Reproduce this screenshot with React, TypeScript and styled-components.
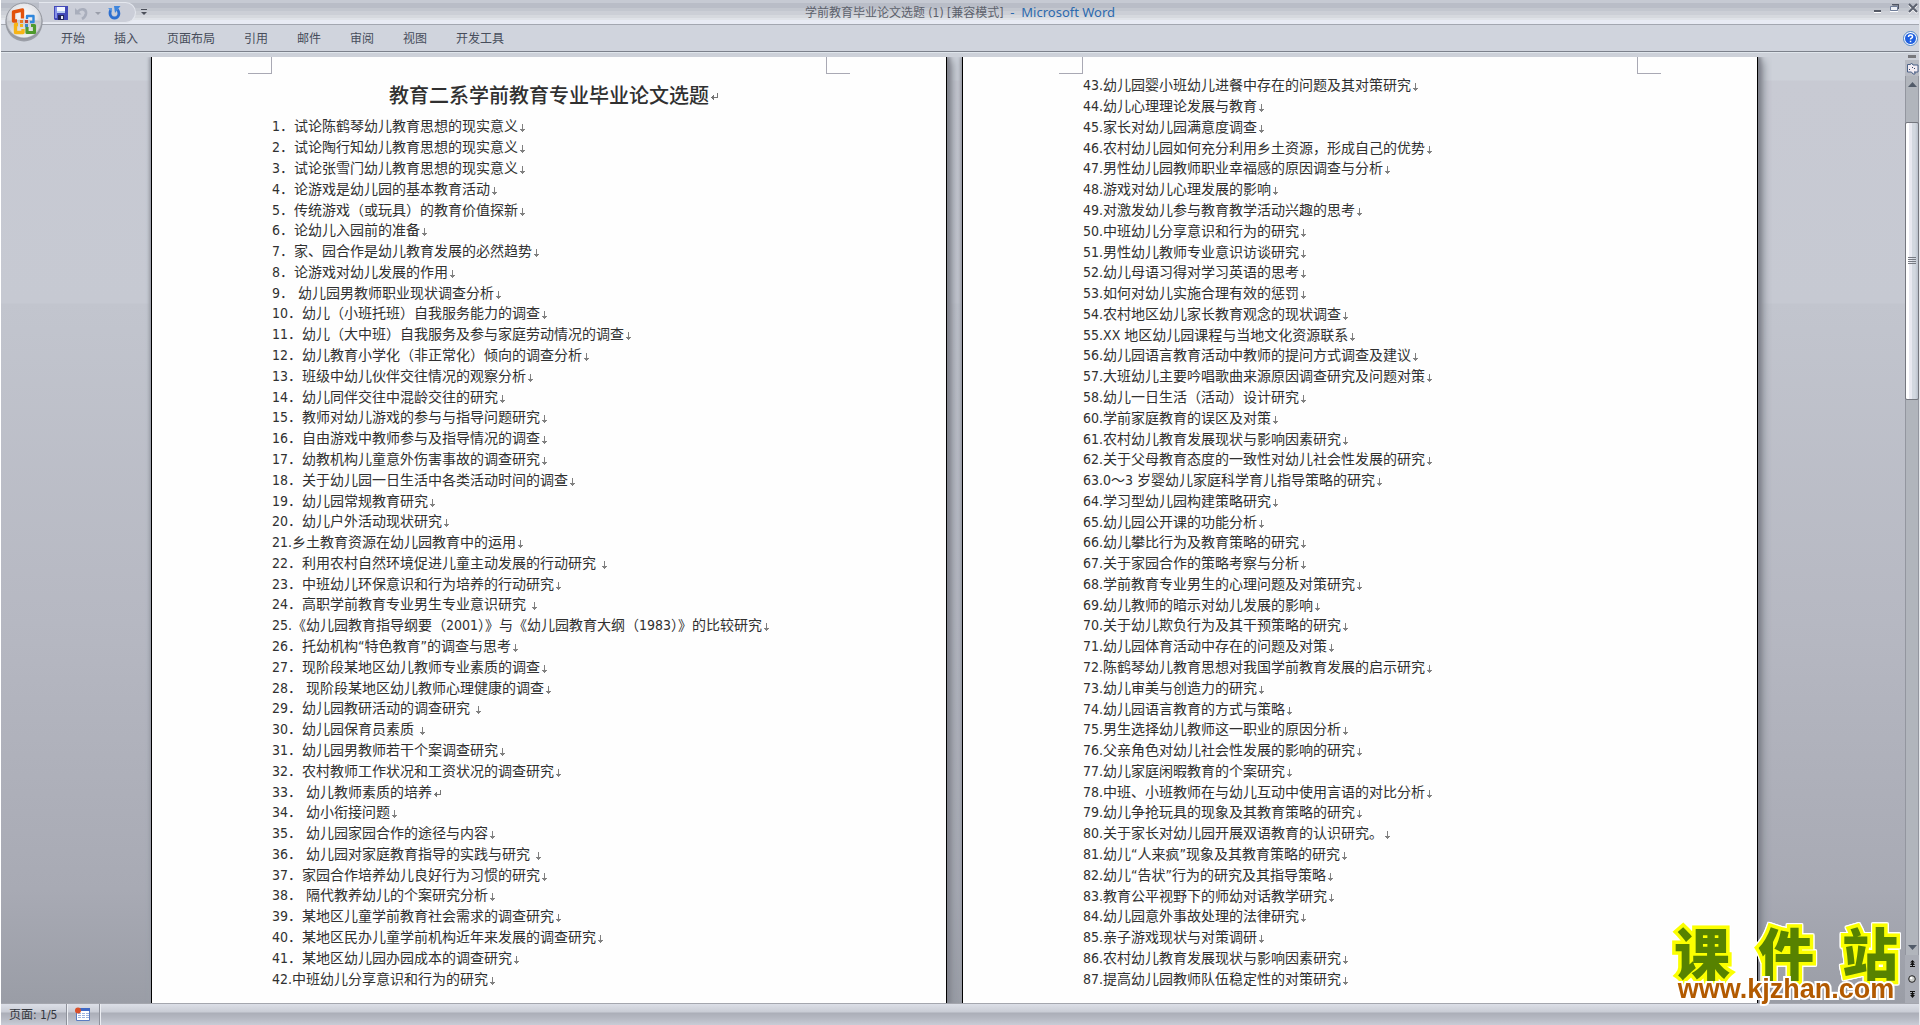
import React from "react";
import styled, { createGlobalStyle, css } from "styled-components";

const GlobalStyle = createGlobalStyle`
  * { box-sizing: border-box; }
  body { margin: 0; background: #ffffff; }
  button { border: 0; padding: 0; margin: 0; background: none; font: inherit; color: inherit; cursor: pointer; }
`;

const latin = `"DejaVu Sans Condensed", "DejaVu Sans"`;
const cjk = `"Noto Sans CJK SC"`;

const Shell = styled.div`
  display: flex;
  flex-direction: column;
  min-height: 100vh;
  border-left: 1px solid #ffffff;
  border-right: 1px solid #e6e8ec;
  background: #cdd1d9;
  font-family: ${latin}, ${cjk}, sans-serif;
  font-size: 12px;
  color: #3f444e;
`;

/* ---------- header ---------- */

const Header = styled.header`
  display: grid;
  grid-template-columns: 44px 1fr;
  grid-template-rows: 25px 28px;
`;

const TitleBar = styled.div`
  grid-column: 1 / -1;
  grid-row: 1;
  display: grid;
  grid-template-columns: 1fr auto 1fr;
  align-items: start;
  border-bottom: 1px solid #a3a7b0;
  background: linear-gradient(#c6cad3 0 3px, #b9bdc7 3px 8px, #c3c7cf 8px 11px, #cccfd6 11px 15px, #d6d9de 15px 18px, #e0e3e8 18px 20px, #e8ebf4 20px);
`;

const OrbButton = styled.button`
  grid-column: 1;
  grid-row: 1 / 3;
  z-index: 1;
  align-self: start;
  width: 38px;
  height: 40px;
  margin: 2px 0 0 4px;
`;

const QuickArea = styled.div`
  display: flex;
  align-items: center;
  gap: 5px;
  padding: 2px 0 0 38px;
`;

const QuickBar = styled.div`
  display: flex;
  align-items: center;
  gap: 7px;
  width: 97px;
  height: 21px;
  padding-left: 15px;
  border: 1px solid #e4e7ee;
  border-left: 0;
  border-radius: 0 11px 11px 0;
  background: #cbced8;
`;

const IconButton = styled.button`
  display: flex;
  align-items: center;
  justify-content: center;
  flex: none;
`;

const DocTitle = styled.h1`
  margin: 0;
  padding-top: 2px;
  font-size: 12px;
  font-weight: 400;
  line-height: 20px;
  white-space: pre;
  color: #5c616c;
`;

const AppName = styled.span`
  font-family: "Noto Sans", sans-serif;
  font-size: 13px;
  color: #2c6aae;
`;

const WindowButtons = styled.div`
  display: flex;
  justify-content: flex-end;
  gap: 8px;
  padding: 3px 1px 0 0;
`;

const Ribbon = styled.div`
  grid-column: 1 / -1;
  grid-row: 2;
  display: flex;
  align-items: center;
  justify-content: space-between;
  padding: 0 1px 0 46px;
  border-bottom: 1px solid #e0e6ec;
  box-shadow: inset 0 -1px 0 #7c818b;
  background: #d0d4dd;
`;

const Tabs = styled.nav`
  display: flex;
  gap: 1px;
`;

const Tab = styled.button`
  height: 24px;
  padding: 0 14px;
  line-height: 24px;
  color: #474d5b;
`;

/* ---------- document area ---------- */

const Body = styled.main`
  display: flex;
  flex: 1;
`;

const Workspace = styled.div`
  display: flex;
  flex: 1;
  justify-content: center;
  gap: 15px;
  padding: 4px 0 0 3px;
  background: linear-gradient(#cdd1d9 0 27px, #c8cad3 28px, #c6c9d2 250px, #c2c5ce 251px, #b6b8c2 60%, #a8aab4 88%, #9a9da6);
`;

const Page = styled.article`
  display: flex;
  flex-direction: column;
  flex: 0 1 796px;
  min-width: 0;
  padding-bottom: 14px;
  border: solid #000000;
  border-width: 0 1px;
  background: #fefefe;
  box-shadow: 2px 0 4px 1px #7f828b, 6px 4px 8px #90939c, -2px 0 3px #a3a6af;
  clip-path: inset(0 -14px 0 -6px);
`;

const Margins = styled.div`
  display: flex;
  justify-content: space-between;
  flex: none;
  height: 17px;
  padding: 0 96px;
`;

const Corner = styled.span<{ $side: "left" | "right" }>`
  width: 24px;
  border-bottom: 1px solid #a9a9b4;
  ${(p) =>
    p.$side === "left"
      ? css`border-right: 1px solid #a9a9b4;`
      : css`border-left: 1px solid #a9a9b4;`}
`;

const Heading = styled.h2`
  display: flex;
  align-items: center;
  justify-content: center;
  flex: none;
  height: 41px;
  margin: 0;
  padding-left: 9px;
  font-size: 20px;
  font-weight: 500;
  color: #303030;
`;

const Topics = styled.ol`
  display: grid;
  flex: 1;
  grid-auto-rows: minmax(20px, 1fr);
  margin: 0;
  padding: 1px 0 0 120px;
  list-style: none;
`;

const Topic = styled.li`
  display: flex;
  align-items: center;
  font-size: 14px;
  line-height: 20px;
  white-space: pre;
  color: #303030;
`;

const MarkBox = styled.svg`
  flex: none;
  margin: 4px 0 0 2px;
`;

/* ---------- scroll bar ---------- */

const ScrollColumn = styled.aside`
  display: flex;
  flex-direction: column;
  width: 14px;
  padding-top: 2px;
  background: #cdd1d9;
`;

const SplitHandle = styled.button`
  align-self: center;
  width: 8px;
  height: 3px;
  margin-bottom: 2px;
  background: #77787c;
`;

const ToolButton = styled.button<{ $light?: boolean }>`
  display: flex;
  align-items: center;
  justify-content: center;
  height: 16px;
  background: ${(p) => (p.$light ? "#b8bbc3" : "#a9acb5")};
`;

const Track = styled.div`
  display: flex;
  flex-direction: column;
  flex: 1;
  border: solid #93969f;
  border-width: 0 1px;
  background: #b1b5bc;
`;

const Arrow = styled.button`
  display: flex;
  align-items: center;
  justify-content: center;
  flex: none;
  height: 16px;
`;

const Rail = styled.div`
  flex: 1;
  padding-top: 30px;
`;

const Thumb = styled.div`
  display: flex;
  flex-direction: column;
  align-items: center;
  justify-content: center;
  gap: 1px;
  height: 34%;
  margin: 0 -1px;
  border: 1px solid #75777f;
  border-radius: 2px;
  background: linear-gradient(90deg, #ffffff 0 3px, #e9e9f1 3px 6px, #d3d8e0 6px 9px, #b9c0cb);
`;

const Grip = styled.i`
  width: 8px;
  height: 1px;
  background: #777a82;
`;

/* ---------- status bar ---------- */

const Status = styled.footer`
  display: flex;
  height: 22px;
  border-top: 1px solid #a4a6ae;
  background: linear-gradient(#dcdfe7, #c9ccd5 8px, #abaeb8 9px, #b5b8c2 14px, #c9ccd6);
`;

const StatusItem = styled.button`
  display: flex;
  align-items: center;
  padding: 0 9px 2px 8px;
  border-right: 1px solid #8e919b;
  box-shadow: 1px 0 0 #eceef3;
  color: #33363d;
`;

/* ---------- site badge ---------- */

const Badge = styled.a`
  position: fixed;
  right: 22px;
  bottom: 24px;
  display: flex;
  flex-direction: column;
  align-items: center;
  text-decoration: none;
  white-space: nowrap;
`;

const BadgeName = styled.strong`
  display: flex;
  justify-content: space-between;
  width: 224px;
  font-family: ${cjk}, sans-serif;
  font-size: 56px;
  font-weight: 900;
  line-height: 52px;
  color: #578200;
  -webkit-text-stroke: 7px #fbff00;
  paint-order: stroke fill;
  filter: drop-shadow(1px 0 0 #fff) drop-shadow(-1px 0 0 #fff) drop-shadow(0 1px 0 #fff) drop-shadow(0 -1px 0 #fff);
`;

const BadgeUrl = styled.span`
  z-index: 1;
  font-family: "Liberation Sans", Arial, sans-serif;
  font-size: 27px;
  font-weight: 700;
  line-height: 24px;
  color: #b25a00;
  -webkit-text-stroke: 4px #ffffff;
  paint-order: stroke fill;
`;

/* ---------- drawings ---------- */

const LineMark = () => (
  <MarkBox width="5" height="8" viewBox="0 0 5 8" aria-hidden="true">
    <path d="M2 0h1v5h2v1H4v1H3v1H2V7H1V6H0V5h2z" fill="#808080" shapeRendering="crispEdges" />
  </MarkBox>
);

const ReturnMark = () => (
  <MarkBox width="7" height="8" viewBox="0 0 7 8" aria-hidden="true">
    <path d="M6 0h1v5H3v2H2V6H1V5H0V4h1V3h1V2h1v2h3z" fill="#757575" shapeRendering="crispEdges" />
  </MarkBox>
);

const OfficeOrb = () => (
  <svg width="38" height="40" viewBox="0 0 38 40" aria-hidden="true">
    <defs>
      <radialGradient id="orb" cx="50%" cy="35%" r="65%">
        <stop offset="0" stopColor="#ffffff" />
        <stop offset=".55" stopColor="#e3e4e8" />
        <stop offset=".9" stopColor="#b6b9c0" />
        <stop offset="1" stopColor="#8d9098" />
      </radialGradient>
      <linearGradient id="orbShine" x1="0" y1="0" x2="0" y2="1">
        <stop offset="0" stopColor="#b9bbc2" />
        <stop offset="1" stopColor="#ffffff" />
      </linearGradient>
    </defs>
    <ellipse cx="19" cy="20.500" rx="18.500" ry="19" fill="#858890" opacity=".7" />
    <circle cx="19" cy="19" r="18" fill="url(#orb)" stroke="#94979f" />
    <path d="M2.500 19a16.500 16.500 0 0 0 33 0q-16-3-33 0z" fill="url(#orbShine)" opacity=".8" />
    <path d="M12 19H8.500v-9l9-2v8.500" fill="none" stroke="#e2530c" strokeWidth="3.400" strokeLinejoin="round" />
    <path d="M22 17v-3h6.500v6H25" fill="none" stroke="#2f86dc" strokeWidth="2.400" strokeLinejoin="round" />
    <path d="M13 22.500H10.500v8h7.500V27" fill="none" stroke="#f7b416" strokeWidth="3.400" strokeLinejoin="round" />
    <path d="M22 25v5.500h7.500v-7H26" fill="none" stroke="#4f9a2c" strokeWidth="3.200" strokeLinejoin="round" />
    <path d="M15 18h3v3h-3z" fill="#ee7a1f" />
    <path d="M20 18h3v3h-3z" fill="#c4422e" />
    <path d="M15 22h3v3h-3z" fill="#f3b31a" />
    <path d="M20 22h3v3h-3z" fill="#3f86c8" />
  </svg>
);

const SaveIcon = () => (
  <svg width="14" height="14" viewBox="0 0 14 14" aria-hidden="true">
    <path d="M0 0h14v14H1L0 13z" fill="#4349b8" />
    <path d="M1 1h2v11H1z" fill="#8691e8" />
    <path d="M3 1h8v6H3z" fill="#f2f6ff" />
    <path d="M3 5h8v2H3z" fill="#b9cdf3" />
    <path d="M4 9h6v5H4z" fill="#23265c" />
    <path d="M7 10h2v3H7z" fill="#e9ebf5" />
  </svg>
);

const UndoIcon = () => (
  <svg width="13" height="14" viewBox="0 0 13 14" aria-hidden="true">
    <path d="M2.500 6C6 1.500 11.500 3 11 7.500Q10.500 11 7 13" fill="none" stroke="#a9aebc" strokeWidth="2.600" />
    <path d="M0 2v6.500h6.500z" fill="#a9aebc" />
  </svg>
);

const RedoIcon = () => (
  <svg width="13" height="14" viewBox="0 0 13 14" aria-hidden="true">
    <path d="M3 3.500C.8 7.500 2.500 12 6.500 12s5.800-4.500 3-8.500" fill="none" stroke="#2d6fd0" strokeWidth="2.800" />
    <path d="M6 0h6.500L7 7z" fill="#3f86dd" />
    <path d="M0 2h4v4z" fill="#5a96e0" />
  </svg>
);

const Caret = ({ color, bar }: { color: string; bar?: boolean }) => (
  <svg width="6" height="7" viewBox="0 0 6 7" aria-hidden="true">
    {bar && <path d="M0 0h6v1H0z" fill={color} />}
    <path d="M0 3h6L3 6z" fill={color} />
  </svg>
);

const MinimiseIcon = () => (
  <svg width="9" height="11" viewBox="0 0 9 11" aria-hidden="true">
    <path d="M1 7h7v2H1z" fill="#555a66" />
    <path d="M1 9h7v1H1z" fill="#ffffff" />
  </svg>
);

const RestoreIcon = () => (
  <svg width="10" height="11" viewBox="0 0 10 11" aria-hidden="true">
    <path d="M2.500 1v1h6v4" fill="none" stroke="#4f5563" />
    <path d="M2 1h7v1H2z" fill="#4f5563" />
    <path d="M.5 3.500h7v4h-7z" fill="#eef1f7" stroke="#6f7d99" />
    <path d="M0 8h8v1H0z" fill="#ffffff" />
  </svg>
);

const CloseIcon = () => (
  <svg width="10" height="11" viewBox="0 0 10 11" aria-hidden="true">
    <path d="M1 2l8 8M9 2L1 10" stroke="#ffffff" strokeWidth="2" />
    <path d="M1 1l8 8M9 1L1 9" stroke="#5b616f" strokeWidth="2" />
  </svg>
);

const HelpIcon = () => (
  <svg width="15" height="15" viewBox="0 0 15 15" aria-hidden="true">
    <circle cx="7.500" cy="7.500" r="7" fill="#ffffff" stroke="#4d82c4" />
    <circle cx="7.500" cy="7.500" r="5.500" fill="#1f5fe0" />
    <path d="M5.500 6q0-2 2-2t2 1.700q0 1-1 1.500t-1 1.300" fill="none" stroke="#ffffff" strokeWidth="1.500" />
    <path d="M6.800 9.700h1.500v1.500H6.800z" fill="#ffffff" />
  </svg>
);

const RulerIcon = () => (
  <svg width="13" height="13" viewBox="0 0 13 13" aria-hidden="true">
    <path d="M1.500 2.500h3l1-1.500 1.500 2h5v7h-3v2H7l-1.500-2h-4z" fill="#f3edf3" stroke="#4a6186" />
    <path d="M3 8l1-1M6 5l1 1M8 7l1-1M8 10h1" stroke="#35496d" />
  </svg>
);

const Triangle = ({ down }: { down?: boolean }) => (
  <svg width="9" height="5" viewBox="0 0 9 5" aria-hidden="true">
    <path d={down ? "M0 0h9L4.500 5z" : "M0 5h9L4.500 0z"} fill="#525b69" />
  </svg>
);

const PageJump = ({ down }: { down?: boolean }) => (
  <svg width="7" height="8" viewBox="0 0 7 8" aria-hidden="true">
    <path
      d={down ? "M1 0h5v1H1zM3 1h1v1h2L3.500 4.500 1 2h2zM1 4h5L3.500 7z" : "M1 7h5v1H1zM3 6h1v1H3zM1 3.500L3.500 1 6 3.500zM1 6l2.500-3L6 6z"}
      fill="#101010"
    />
  </svg>
);

const BrowseIcon = () => (
  <svg width="8" height="8" viewBox="0 0 8 8" aria-hidden="true">
    <circle cx="4" cy="4" r="3.300" fill="#c9cbc9" stroke="#222222" />
    <circle cx="3.200" cy="3" r="1.300" fill="#ffffff" />
  </svg>
);

const MacroIcon = () => (
  <svg width="15" height="14" viewBox="0 0 15 14" aria-hidden="true">
    <path d="M1.500 1.500h13v12h-13z" fill="#ffffff" stroke="#5b7cc0" />
    <path d="M1 1h14v3H1z" fill="#3f68c4" />
    <path d="M3 6h3v1H3zM7 6h3v1H7zM11 6h3v1h-3zM3 8h3v1H3zM7 8h3v1H7zM11 8h3v1h-3zM3 10h3v1H3zM7 10h3v1H7zM11 10h3v1h-3z" fill="#9db3e0" />
    <circle cx="3" cy="3.500" r="3" fill="#d9502a" />
  </svg>
);

/* ---------- content ---------- */

const tabs = ["开始", "插入", "页面布局", "引用", "邮件", "审阅", "视图", "开发工具"];

const firstPage = [
  "1．试论陈鹤琴幼儿教育思想的现实意义",
  "2．试论陶行知幼儿教育思想的现实意义",
  "3．试论张雪门幼儿教育思想的现实意义",
  "4．论游戏是幼儿园的基本教育活动",
  "5．传统游戏（或玩具）的教育价值探新",
  "6．论幼儿入园前的准备",
  "7．家、园合作是幼儿教育发展的必然趋势",
  "8．论游戏对幼儿发展的作用",
  "9． 幼儿园男教师职业现状调查分析",
  "10．幼儿（小班托班）自我服务能力的调查",
  "11．幼儿（大中班）自我服务及参与家庭劳动情况的调查",
  "12．幼儿教育小学化（非正常化）倾向的调查分析",
  "13．班级中幼儿伙伴交往情况的观察分析",
  "14．幼儿同伴交往中混龄交往的研究",
  "15．教师对幼儿游戏的参与与指导问题研究",
  "16．自由游戏中教师参与及指导情况的调查",
  "17．幼教机构儿童意外伤害事故的调查研究",
  "18．关于幼儿园一日生活中各类活动时间的调查",
  "19．幼儿园常规教育研究",
  "20．幼儿户外活动现状研究",
  "21.乡土教育资源在幼儿园教育中的运用",
  "22．利用农村自然环境促进儿童主动发展的行动研究 ",
  "23．中班幼儿环保意识和行为培养的行动研究",
  "24．高职学前教育专业男生专业意识研究 ",
  "25.《幼儿园教育指导纲要（2001）》与《幼儿园教育大纲（1983）》的比较研究",
  "26．托幼机构“特色教育”的调查与思考",
  "27．现阶段某地区幼儿教师专业素质的调查",
  "28． 现阶段某地区幼儿教师心理健康的调查",
  "29．幼儿园教研活动的调查研究 ",
  "30．幼儿园保育员素质 ",
  "31．幼儿园男教师若干个案调查研究",
  "32．农村教师工作状况和工资状况的调查研究",
  "33． 幼儿教师素质的培养",
  "34． 幼小衔接问题",
  "35． 幼儿园家园合作的途径与内容",
  "36． 幼儿园对家庭教育指导的实践与研究 ",
  "37．家园合作培养幼儿良好行为习惯的研究",
  "38． 隔代教养幼儿的个案研究分析",
  "39．某地区儿童学前教育社会需求的调查研究",
  "40．某地区民办儿童学前机构近年来发展的调查研究",
  "41．某地区幼儿园办园成本的调查研究",
  "42.中班幼儿分享意识和行为的研究",
];

const secondPage = [
  "43.幼儿园婴小班幼儿进餐中存在的问题及其对策研究",
  "44.幼儿心理理论发展与教育",
  "45.家长对幼儿园满意度调查",
  "46.农村幼儿园如何充分利用乡土资源，形成自己的优势",
  "47.男性幼儿园教师职业幸福感的原因调查与分析",
  "48.游戏对幼儿心理发展的影响",
  "49.对激发幼儿参与教育教学活动兴趣的思考",
  "50.中班幼儿分享意识和行为的研究",
  "51.男性幼儿教师专业意识访谈研究",
  "52.幼儿母语习得对学习英语的思考",
  "53.如何对幼儿实施合理有效的惩罚",
  "54.农村地区幼儿家长教育观念的现状调查",
  "55.XX 地区幼儿园课程与当地文化资源联系",
  "56.幼儿园语言教育活动中教师的提问方式调查及建议",
  "57.大班幼儿主要吟唱歌曲来源原因调查研究及问题对策",
  "58.幼儿一日生活（活动）设计研究",
  "60.学前家庭教育的误区及对策",
  "61.农村幼儿教育发展现状与影响因素研究",
  "62.关于父母教育态度的一致性对幼儿社会性发展的研究",
  "63.0～3 岁婴幼儿家庭科学育儿指导策略的研究",
  "64.学习型幼儿园构建策略研究",
  "65.幼儿园公开课的功能分析",
  "66.幼儿攀比行为及教育策略的研究",
  "67.关于家园合作的策略考察与分析",
  "68.学前教育专业男生的心理问题及对策研究",
  "69.幼儿教师的暗示对幼儿发展的影响",
  "70.关于幼儿欺负行为及其干预策略的研究",
  "71.幼儿园体育活动中存在的问题及对策",
  "72.陈鹤琴幼儿教育思想对我国学前教育发展的启示研究",
  "73.幼儿审美与创造力的研究",
  "74.幼儿园语言教育的方式与策略",
  "75.男生选择幼儿教师这一职业的原因分析",
  "76.父亲角色对幼儿社会性发展的影响的研究",
  "77.幼儿家庭闲暇教育的个案研究",
  "78.中班、小班教师在与幼儿互动中使用言语的对比分析",
  "79.幼儿争抢玩具的现象及其教育策略的研究",
  "80.关于家长对幼儿园开展双语教育的认识研究。",
  "81.幼儿“人来疯”现象及其教育策略的研究",
  "82.幼儿“告状”行为的研究及其指导策略",
  "83.教育公平视野下的师幼对话教学研究",
  "84.幼儿园意外事故处理的法律研究",
  "85.亲子游戏现状与对策调研",
  "86.农村幼儿教育发展现状与影响因素研究",
  "87.提高幼儿园教师队伍稳定性的对策研究",
];

const TopicList = ({ items }: { items: string[] }) => (
  <Topics>
    {items.map((text) => (
      <Topic key={text}>
        {text}
        {text.startsWith("33") ? <ReturnMark /> : <LineMark />}
      </Topic>
    ))}
  </Topics>
);

const PageMargins = () => (
  <Margins>
    <Corner $side="left" />
    <Corner $side="right" />
  </Margins>
);

export default function App() {
  return (
    <Shell>
      <GlobalStyle />
      <Header>
        <OrbButton aria-label="Office"><OfficeOrb /></OrbButton>
        <TitleBar>
          <QuickArea>
            <QuickBar>
              <IconButton aria-label="保存"><SaveIcon /></IconButton>
              <IconButton aria-label="撤消"><UndoIcon /></IconButton>
              <IconButton aria-label="撤消列表"><Caret color="#9a9eaa" /></IconButton>
              <IconButton aria-label="重复"><RedoIcon /></IconButton>
            </QuickBar>
            <IconButton aria-label="自定义快速访问工具栏"><Caret color="#4c505a" bar /></IconButton>
          </QuickArea>
          <DocTitle>学前教育毕业论文选题 (1) [兼容模式]  <AppName>-  Microsoft Word</AppName></DocTitle>
          <WindowButtons>
            <IconButton aria-label="最小化"><MinimiseIcon /></IconButton>
            <IconButton aria-label="还原"><RestoreIcon /></IconButton>
            <IconButton aria-label="关闭"><CloseIcon /></IconButton>
          </WindowButtons>
        </TitleBar>
        <Ribbon>
          <Tabs>
            {tabs.map((name) => <Tab key={name}>{name}</Tab>)}
          </Tabs>
          <IconButton aria-label="帮助"><HelpIcon /></IconButton>
        </Ribbon>
      </Header>

      <Body>
        <Workspace>
          <Page>
            <PageMargins />
            <Heading>教育二系学前教育专业毕业论文选题<ReturnMark /></Heading>
            <TopicList items={firstPage} />
          </Page>
          <Page>
            <PageMargins />
            <TopicList items={secondPage} />
          </Page>
        </Workspace>
        <ScrollColumn>
          <SplitHandle aria-label="拆分" />
          <ToolButton $light aria-label="标尺"><RulerIcon /></ToolButton>
          <Track>
            <Arrow aria-label="向上滚动"><Triangle /></Arrow>
            <Rail>
              <Thumb>
                <Grip /><Grip /><Grip /><Grip />
              </Thumb>
            </Rail>
            <Arrow aria-label="向下滚动"><Triangle down /></Arrow>
          </Track>
          <ToolButton aria-label="前一页"><PageJump /></ToolButton>
          <ToolButton aria-label="选择浏览对象"><BrowseIcon /></ToolButton>
          <ToolButton aria-label="下一页"><PageJump down /></ToolButton>
        </ScrollColumn>
      </Body>

      <Status>
        <StatusItem>页面: 1/5</StatusItem>
        <StatusItem aria-label="录制宏"><MacroIcon /></StatusItem>
      </Status>

      <Badge href="#">
        <BadgeName><span>课</span><span>件</span><span>站</span></BadgeName>
        <BadgeUrl>www.kjzhan.com</BadgeUrl>
      </Badge>
    </Shell>
  );
}
